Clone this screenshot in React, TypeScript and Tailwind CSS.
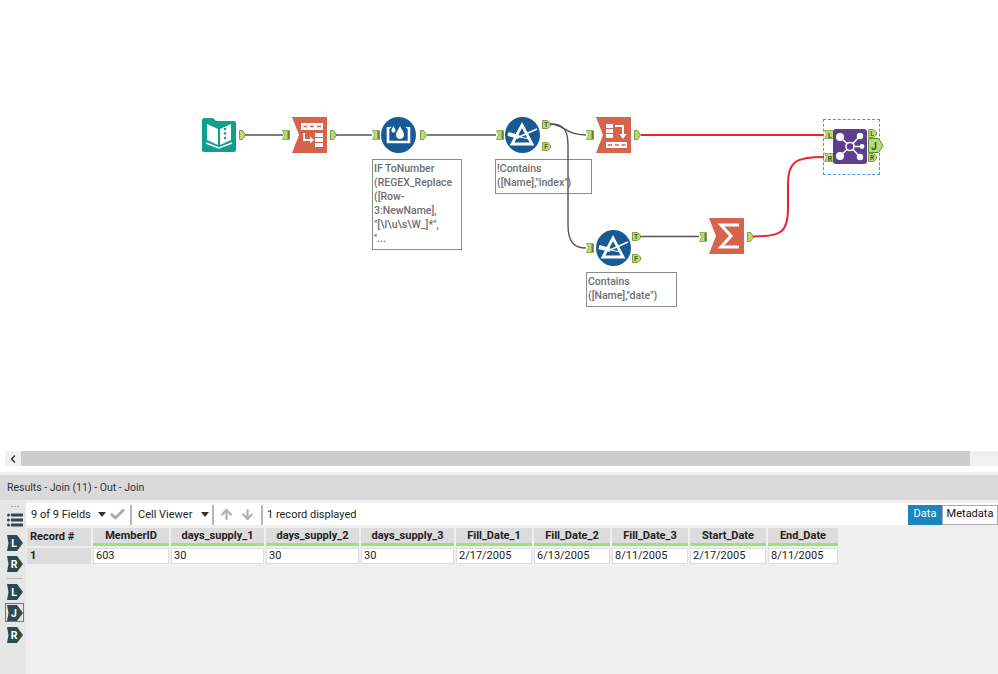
import React from 'react';
import { ArrowDown, ArrowUp, Check, ChevronLeft } from 'lucide-react';

const columns = [
  { name: 'MemberID', value: '603' },
  { name: 'days_supply_1', value: '30' },
  { name: 'days_supply_2', value: '30' },
  { name: 'days_supply_3', value: '30' },
  { name: 'Fill_Date_1', value: '2/17/2005' },
  { name: 'Fill_Date_2', value: '6/13/2005' },
  { name: 'Fill_Date_3', value: '8/11/2005' },
  { name: 'Start_Date', value: '2/17/2005' },
  { name: 'End_Date', value: '8/11/2005' },
];

const AnchorIn = ({ className }: { className: string }) => (
  <svg className={`absolute ${className}`} width="8" height="10" viewBox="0 0 8 10">
    <path d="M0.500 0.500H7.500V9.500H0.500L2.500 5Z" fill="#b9da74" stroke="#93b256" />
    <rect x="5.500" y="1" width="2" height="8" fill="#64863e" />
  </svg>
);

const JoinIn = ({ className, label }: { className: string; label: string }) => (
  <svg className={`absolute ${className}`} width="10" height="9" viewBox="0 0 10 9">
    <path d="M0.500 0.500H9.500V8.500H0.500L2.500 4.500Z" fill="#b9da74" stroke="#93b256" />
    <text x="6" y="7.500" fontSize="7" fontWeight="700" textAnchor="middle" fill="#3d5a2a">{label}</text>
  </svg>
);

const AnchorOut = ({ className }: { className: string }) => (
  <svg className={`absolute ${className}`} width="7" height="10" viewBox="0 0 7 10">
    <path d="M0.500 0.500H3.500L6.500 5L3.500 9.500H0.500Z" fill="#b9da74" stroke="#7f9f45" />
  </svg>
);

const LabelOut = ({ className, label }: { className: string; label: string }) => (
  <svg className={`absolute ${className}`} width="9" height="9" viewBox="0 0 9 9">
    <path d="M0.500 0.500H5.500L8.500 3V6L5.500 8.500H0.500Z" fill="#b9da74" stroke="#7f9f45" />
    <text x="4" y="7" fontSize="6.500" fontWeight="700" textAnchor="middle" fill="#3d5a2a">{label}</text>
  </svg>
);

const ToolShape = ({ className, children }: { className: string; children: React.ReactNode }) => (
  <svg className={`absolute ${className}`} width="35" height="36" viewBox="0 0 35 36">
    <path d="M0 0H35V36H0L7 18Z" fill="#d5644b" />
    {children}
  </svg>
);

const Circle = ({ className, children }: { className: string; children: React.ReactNode }) => (
  <svg className={`absolute ${className}`} width="35" height="36" viewBox="0 0 35 36">
    <ellipse cx="17.500" cy="18" rx="17.500" ry="18" fill="#175a96" />
    {children}
  </svg>
);

const FilterGlyph = () => (
  <g fill="none" stroke="#fff">
    <path d="M17 8L27 27H7Z" strokeWidth="2.800" />
    <path d="M3 17L14 20" strokeWidth="4" />
    <path d="M14 20L32 12" strokeWidth="1.600" />
    <path d="M14 20L25 22" strokeWidth="1" />
  </g>
);

const Note = ({ className, children }: { className: string; children: React.ReactNode }) => (
  <div className={`absolute border border-[#8c8c8c] bg-white px-[1px] py-[2px] text-[10.500px] font-medium leading-[14px] text-[#6e6e6e] ${className}`}>
    {children}
  </div>
);

const Tag = ({ label }: { label: string }) => (
  <svg width="16" height="16" viewBox="0 0 16 16">
    <path d="M0 0H10L16 8L10 16H0L1.500 8Z" fill="#2f4a4d" />
    <text x="7" y="12" fontSize="10.500" fontWeight="700" textAnchor="middle" fill="#fff">{label}</text>
  </svg>
);

const Caret = () => (
  <svg width="8" height="5" viewBox="0 0 8 5"><path d="M0 0H8L4 5Z" fill="#333" /></svg>
);

const Sep = () => <div className="h-[20px] w-[2px] bg-[#b5b5b5]" />;

const Canvas = () => (
  <div className="relative h-[451px] bg-white">
    {/* Input */}
    <svg className="absolute left-[202px] top-[118px]" width="34" height="34" viewBox="0 0 34 34">
      <path d="M2 0H11L14 3H32C33 3 34 4 34 5V32C34 33 33 34 32 34H2C1 34 0 33 0 32V2C0 1 1 0 2 0Z" fill="#0f9f8e" />
      <path d="M5 6L16 11V27L5 22Z" fill="#fff" />
      <path d="M18 11L29 6V22L18 27Z" fill="#fff" />
      <path d="M4 25L17 30L30 25" stroke="#fff" strokeWidth="1.600" fill="none" />
      <circle cx="23" cy="11" r="1.300" fill="#0f9f8e" />
      <circle cx="23" cy="15.500" r="1.300" fill="#0f9f8e" />
      <circle cx="23" cy="20" r="1.300" fill="#0f9f8e" />
    </svg>
    <AnchorOut className="left-[239px] top-[130px]" />

    {/* Select */}
    <AnchorIn className="left-[282px] top-[130px]" />
    <ToolShape className="left-[292px] top-[117px]">
      <rect x="9" y="6" width="22" height="7" fill="#fff" />
      <path d="M11.500 9.500H15M18 9.500H22M25 9.500H29" stroke="#d5644b" strokeWidth="1.400" />
      <path d="M12 16V23H20" stroke="#fff" strokeWidth="1.800" fill="none" />
      <path d="M18 19.500L22 23L18 26.500Z" fill="#fff" />
      <rect x="23" y="16" width="8" height="14" fill="#fff" />
      <path d="M23 20.500H31M23 25.500H31" stroke="#d5644b" strokeWidth="1.200" />
    </ToolShape>
    <AnchorOut className="left-[330px] top-[130px]" />

    {/* Formula */}
    <AnchorIn className="left-[372px] top-[130px]" />
    <Circle className="left-[381px] top-[117px]">
      <path d="M7 10V25H28V10" stroke="#fff" strokeWidth="2.600" fill="none" />
      <path d="M7 12L10 10M28 12L25 10" stroke="#fff" strokeWidth="1.400" />
      <path d="M19 9C21 13 23 15 23 18C23 20.500 21 22 19 22C17 22 15 20.500 15 18C15 15 17 13 19 9Z" fill="#fff" />
      <path d="M12.500 9C13.500 11 14.500 12 14.500 13.500C14.500 15 13.500 15.500 12.500 15.500C11.500 15.500 10.500 15 10.500 13.500C10.500 12 11.500 11 12.500 9Z" fill="#fff" />
    </Circle>
    <AnchorOut className="left-[420px] top-[130px]" />
    <Note className="left-[372px] top-[159px] h-[91px] w-[90px]">
      IF ToNumber<br />(REGEX_Replace<br />([Row-<br />3:NewName],<br />"[\l\u\s\W_]*",<br />''...
    </Note>

    {/* Filter 1 */}
    <AnchorIn className="left-[496px] top-[130px]" />
    <Circle className="left-[505px] top-[117px]"><FilterGlyph /></Circle>
    <LabelOut className="left-[542px] top-[120px]" label="T" />
    <LabelOut className="left-[542px] top-[142px]" label="F" />
    <Note className="left-[495px] top-[159px] h-[35px] w-[97px]">
      !Contains<br />([Name],"index")
    </Note>

    {/* Dynamic rename */}
    <AnchorIn className="left-[586px] top-[130px]" />
    <ToolShape className="left-[596px] top-[117px]">
      <rect x="10" y="7" width="7" height="14" fill="#fff" />
      <path d="M10 11.500H17M10 16.500H17" stroke="#d5644b" strokeWidth="1.200" />
      <path d="M19 9H27V19" stroke="#fff" strokeWidth="1.800" fill="none" />
      <path d="M23.500 17H30.500L27 22Z" fill="#fff" />
      <rect x="10" y="25" width="21" height="6" fill="#fff" />
      <path d="M12 28H16M19 28H23M25.500 28H29.500" stroke="#d5644b" strokeWidth="1.400" />
    </ToolShape>
    <AnchorOut className="left-[634px] top-[130px]" />

    {/* Filter 2 */}
    <AnchorIn className="left-[586px] top-[243px]" />
    <Circle className="left-[596px] top-[230px]"><FilterGlyph /></Circle>
    <LabelOut className="left-[632px] top-[232px]" label="T" />
    <LabelOut className="left-[632px] top-[254px]" label="F" />
    <Note className="left-[586px] top-[272px] h-[35px] w-[91px]">
      Contains<br />([Name],"date")
    </Note>

    {/* Summarize */}
    <AnchorIn className="left-[699px] top-[232px]" />
    <ToolShape className="left-[709px] top-[218px]">
      <path d="M30 7H12L22 18L12 29H30" fill="none" stroke="#fff" strokeWidth="3" />
    </ToolShape>
    <AnchorOut className="left-[747px] top-[232px]" />

    {/* Connections sit over the annotations */}
    <svg className="absolute inset-0" width="998" height="451" fill="none">
      <g stroke="#555" strokeWidth="1.400">
        <path d="M245 135H283" />
        <path d="M336 135H372" />
        <path d="M427 135H496" />
        <path d="M550 124C564 124 565 135 586 135" />
        <path d="M550 124C562 124 568 128 568 145V225C568 243 575 248 586 248" />
        <path d="M641 236.500H699" />
      </g>
      <g stroke="#e8252a" strokeWidth="2">
        <path d="M641 135H824" />
        <path d="M753 236.500C782 236.500 788 232 788 208V184C788 162 795 157 824 157" />
      </g>
    </svg>

    {/* Join */}
    <div className="absolute left-[823px] top-[119px] h-[56px] w-[57px] border border-dashed border-[#3b9be8]" />
    <JoinIn className="left-[824px] top-[130px]" label="L" />
    <JoinIn className="left-[824px] top-[153px]" label="R" />
    <svg className="absolute left-[833px] top-[129px]" width="34" height="35" viewBox="0 0 34 35">
      <rect width="34" height="35" rx="3" fill="#5d3f8e" />
      <g stroke="#fff" strokeWidth="1.600" fill="none">
        <circle cx="17" cy="17.500" r="4" />
        <path d="M14 14.500L7 8M20 14.500L26 8M21 17.500H28M14 20.500L7 27M20 20.500L26 27" />
      </g>
      <g fill="#fff">
        <circle cx="7" cy="8" r="4" />
        <circle cx="27" cy="7" r="3.200" />
        <circle cx="29" cy="17.500" r="2.400" />
        <circle cx="7" cy="27" r="4" />
        <circle cx="27" cy="28" r="3.200" />
      </g>
    </svg>
    <LabelOut className="left-[868px] top-[129px]" label="L" />
    <svg className="absolute left-[868px] top-[138px]" width="16" height="15" viewBox="0 0 16 15">
      <path d="M0.500 0.500H10.500L15 7.500L10.500 14.500H0.500Z" fill="#b9da74" stroke="#5f8a3a" />
      <text x="6" y="11.500" fontSize="10.500" fontWeight="700" textAnchor="middle" fill="#2f5a2a">J</text>
    </svg>
    <LabelOut className="left-[868px] top-[153px]" label="R" />
  </div>
);

const Sidebar = () => (
  <div className="flex w-[26px] flex-col items-center bg-[#e6e6e6] pl-[3px] pt-[6px]">
    <div className="flex gap-[1px]">
      <span className="h-[1px] w-[2px] bg-[#aaa]" />
      <span className="h-[1px] w-[2px] bg-[#aaa]" />
      <span className="h-[1px] w-[2px] bg-[#aaa]" />
    </div>
    <svg className="mt-[5px]" width="16" height="16" viewBox="0 0 16 16">
      <g fill="#2f4a4d">
        <circle cx="1.500" cy="3" r="1.500" />
        <rect x="4" y="1.500" width="12" height="3" />
        <circle cx="1.500" cy="8" r="1.500" />
        <rect x="4" y="6.500" width="12" height="3" />
        <circle cx="1.500" cy="13" r="1.500" />
        <rect x="4" y="11.500" width="12" height="3" />
      </g>
    </svg>
    <div className="mt-[7px] h-[16px]"><Tag label="L" /></div>
    <div className="mt-[5px] h-[16px]"><Tag label="R" /></div>
    <div className="mt-[6px] h-[1px] w-[16px] bg-[#bbb]" />
    <div className="mt-[5px] h-[16px]"><Tag label="L" /></div>
    <div className="mt-[3px] flex h-[19px] w-[19px] items-center justify-center border border-[#2a8be0]"><Tag label="J" /></div>
    <div className="mt-[5px] h-[16px]"><Tag label="R" /></div>
  </div>
);

const Toolbar = () => (
  <div className="flex h-[22px] items-center whitespace-nowrap bg-white pl-[5px] pt-[1px] text-[11px] text-[#222]">
    <span className="w-[67px] pt-[1px]">9 of 9 Fields</span>
    <span className="flex"><Caret /></span>
    <Check className="ml-[3px] text-[#aaa]" size={17} strokeWidth={4} />
    <span className="ml-[4px]"><Sep /></span>
    <span className="ml-[6px] w-[63px] pt-[1px]">Cell Viewer</span>
    <span className="flex"><Caret /></span>
    <span className="ml-[3px]"><Sep /></span>
    <ArrowUp className="ml-[5px] text-[#b0b0b0]" size={15} strokeWidth={3.500} />
    <ArrowDown className="ml-[6px] text-[#b0b0b0]" size={15} strokeWidth={3.500} />
    <span className="ml-[6px]"><Sep /></span>
    <span className="ml-[4px] pt-[1px]">1 record displayed</span>
    <div className="ml-auto flex h-[20px]">
      <div className="flex w-[34px] items-center justify-center bg-[#1a86bb] text-white">Data</div>
      <div className="flex w-[56px] items-center justify-center border border-[#aaa] bg-white text-[#111]">Metadata</div>
    </div>
  </div>
);

const ResultsTable = () => (
  <div className="mt-[3px] ml-[1px] grid w-fit grid-cols-[64px_76px_93px_93px_93px_76px_76px_76px_76px_70px] gap-x-[2px] gap-y-[2px] text-[11px] text-[#222]">
    <div className="flex h-[18px] items-center bg-[#dcdcdc] pl-[3px] pt-[1px] font-bold">Record #</div>
    {columns.map((c) => (
      <div key={c.name} className="flex h-[18px] items-center justify-center border-b-[3px] border-[#9be27a] bg-[#dcdcdc] pt-[1px] font-bold">{c.name}</div>
    ))}
    <div className="flex h-[16px] items-center bg-[#dcdcdc] pl-[3px] pt-[1px] font-bold">1</div>
    {columns.map((c) => (
      <div key={c.name} className="flex h-[16px] items-center border border-[#dedede] bg-white pl-[2px] pt-[1px]">{c.value}</div>
    ))}
  </div>
);

const App: React.FC = () => {
  return (
    <div className="flex h-[674px] w-[998px] flex-col overflow-hidden bg-white font-['Roboto','Liberation_Sans',sans-serif]">
      <Canvas />

      {/* Horizontal scrollbar */}
      <div className="flex h-[15px] pl-[5px]">
        <div className="flex w-[16px] items-center justify-center bg-[#f0f0f0]">
          <ChevronLeft className="text-[#333]" size={12} strokeWidth={3} />
        </div>
        <div className="w-[949px] bg-[#cdcdcd]" />
        <div className="flex-1 bg-[#f0f0f0]" />
      </div>
      <div className="h-[6px] bg-white" />
      <div className="h-[3px] bg-[#eeeeee]" />

      <div className="flex h-[25px] items-center bg-[#d9d9d9] pl-[7px] pt-[1px] text-[10.500px] text-[#333]">
        Results - Join (11) - Out - Join
      </div>

      <div className="flex flex-1">
        <Sidebar />
        <div className="flex flex-1 flex-col bg-[#efefef] pt-[3px]">
          <Toolbar />
          <ResultsTable />
        </div>
      </div>
    </div>
  );
};

export default App;
